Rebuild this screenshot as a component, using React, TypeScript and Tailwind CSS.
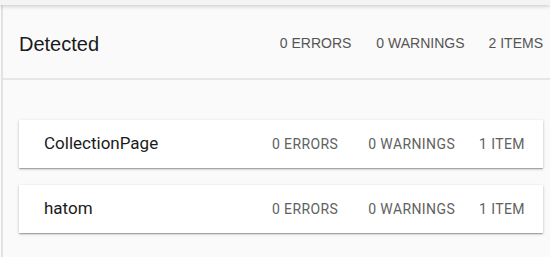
const TOTALS = { errors: 0, warnings: 0, items: 2 };

interface Entity {
  name: string;
  errors: number;
  warnings: number;
  items: number;
}

const ENTITIES: Entity[] = [
  { name: 'CollectionPage', errors: 0, warnings: 0, items: 1 },
  { name: 'hatom', errors: 0, warnings: 0, items: 1 },
];

function EntityCard({ entity }: { entity: Entity }) {
  return (
    <div className="flex h-[48px] items-center bg-white pl-[25px] pr-[18px] shadow-[0_1px_3px_rgba(0,0,0,0.2),0_1px_1px_rgba(0,0,0,0.14),0_2px_1px_-1px_rgba(0,0,0,0.12)]">
      <span className="text-[17px] text-[#1a1a1a]">{entity.name}</span>
      <div className="ml-auto flex items-center text-[14px] tracking-[0.4px] text-[#616161]">
        <span>{entity.errors} ERRORS</span>
        <span className="ml-[30px]">{entity.warnings} WARNINGS</span>
        <span className="ml-[24px]">
          {entity.items} {entity.items === 1 ? 'ITEM' : 'ITEMS'}
        </span>
      </div>
    </div>
  );
}

export default function App() {
  return (
    <div className="h-[257px] w-[550px] overflow-hidden bg-[#fafafa] pl-px font-['Roboto',sans-serif]">
      <div className="h-full border-l-2 border-[#e2e2e2]">
        <div className="relative z-10 -ml-[3px] h-[5px] bg-[#f4f4f4] shadow-[0_1px_4px_rgba(0,0,0,0.22)]" />
        <div className="flex h-[75px] items-center border-b-2 border-[#e6e6e6] pl-[16px] pr-[7px] pt-[4px] font-['Liberation_Sans',Arial,sans-serif]">
          <h2 className="text-[20px] text-[#1a1a1a]">Detected</h2>
          <div className="ml-auto flex items-center text-[14px] text-[#555555]">
            <span>{TOTALS.errors} ERRORS</span>
            <span className="ml-[25px]">{TOTALS.warnings} WARNINGS</span>
            <span className="ml-[24px]">{TOTALS.items} ITEMS</span>
          </div>
        </div>
        <div className="flex flex-col gap-[17px] pl-[16px] pr-[7px] pt-[40px]">
          {ENTITIES.map((entity) => (
            <EntityCard key={entity.name} entity={entity} />
          ))}
        </div>
      </div>
    </div>
  );
}
